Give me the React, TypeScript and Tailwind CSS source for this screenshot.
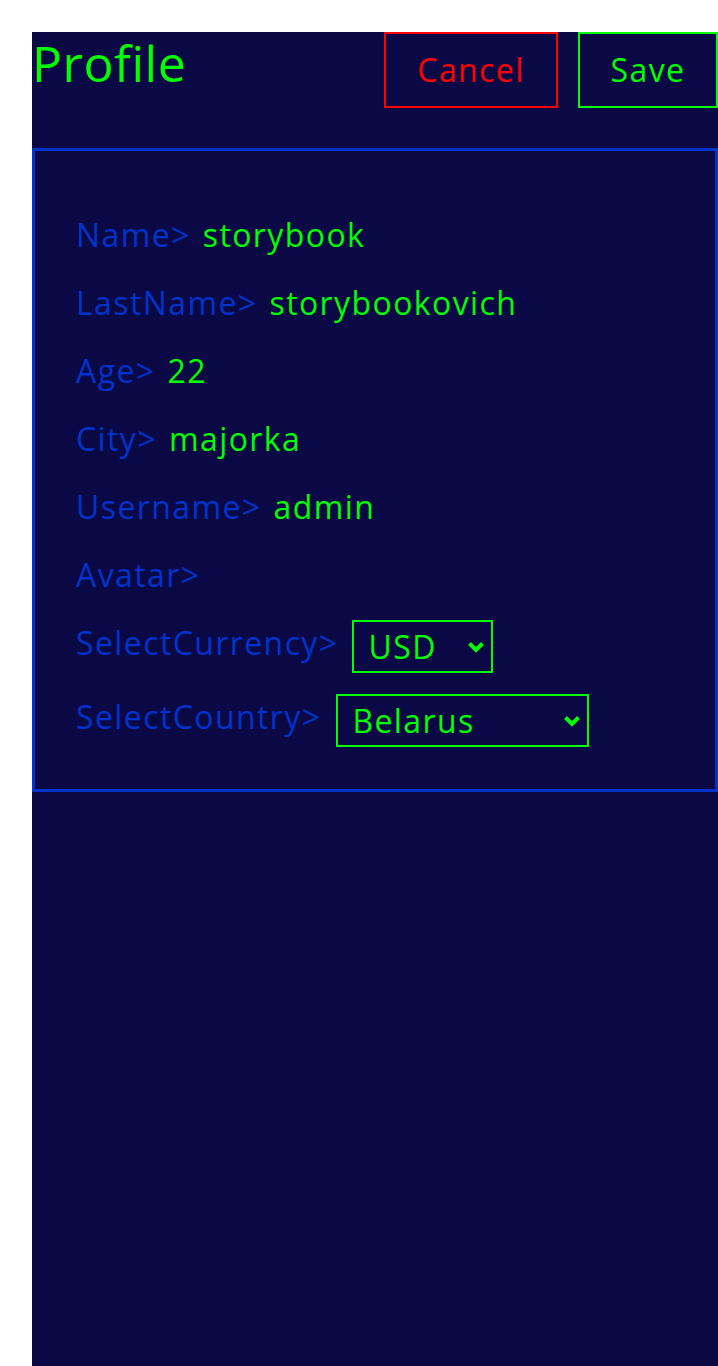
import { type ReactNode } from "react";

const FONT = "font-['Open_Sans','Liberation_Sans',sans-serif] font-normal tracking-[1.4px]";

type Field = { label: string; value?: string };

const fields: Field[] = [
  { label: "Name>", value: "storybook" },
  { label: "LastName>", value: "storybookovich" },
  { label: "Age>", value: "22" },
  { label: "City>", value: "majorka" },
  { label: "Username>", value: "admin" },
  { label: "Avatar>" },
];

function Chevron() {
  return (
    <svg
      aria-hidden
      viewBox="0 0 18 12"
      className="pointer-events-none absolute top-1/2 right-[8px] h-[12px] w-[18px] -translate-y-1/2"
    >
      <path d="M2.5 2.5 L9 9 L15.5 2.5" fill="none" stroke="#00ff00" strokeWidth="4" />
    </svg>
  );
}

function SelectBox({ value, width, children }: { value: string; width: string; children: ReactNode }) {
  return (
    <div className={`relative h-[53px] ${width}`}>
      <select
        defaultValue={value}
        className={`h-full w-full appearance-none border-2 border-[#00ff00] bg-transparent pl-[14px] text-[32px] leading-none text-[#00ff00] outline-none ${FONT}`}
      >
        {children}
      </select>
      <Chevron />
    </div>
  );
}

export default function App() {
  return (
    <div className={`min-h-screen bg-white pt-8 pl-8 ${FONT}`}>
      <main className="min-h-[1334px] bg-[#0a0845]">
        <header className="flex items-start justify-between">
          <h1 className="pt-[1px] text-[50px] leading-[60px] font-normal tracking-[0.5px] text-[#00ff00]">
            Profile
          </h1>
          <div className="flex gap-[20px]">
            <button
              type="button"
              className="h-[76px] w-[174px] border-2 border-[#ff0000] text-[32px] text-[#ff0000]"
            >
              Cancel
            </button>
            <button
              type="button"
              className="h-[76px] w-[140px] border-2 border-[#00ff00] text-[32px] text-[#00ff00]"
            >
              Save
            </button>
          </div>
        </header>

        <section className="mt-[40px] border-[3px] border-[#0033cc] px-[41px] pt-[50px] pb-[42px]">
          {fields.map((f) => (
            <div key={f.label} className="flex h-[68px] items-center gap-3 text-[32px]">
              <span className="text-[#0033cc]">{f.label}</span>
              {f.value ? <span className="text-[#00ff00]">{f.value}</span> : null}
            </div>
          ))}

          <div className="mt-[11px] flex items-start gap-[14px] text-[32px]">
            <span className="leading-[46px] text-[#0033cc]">SelectCurrency&gt;</span>
            <SelectBox value="USD" width="w-[141px]">
              <option value="USD">USD</option>
              <option value="EUR">EUR</option>
              <option value="RUB">RUB</option>
            </SelectBox>
          </div>

          <div className="mt-[21px] flex items-start gap-[15px] text-[32px]">
            <span className="leading-[46px] text-[#0033cc]">SelectCountry&gt;</span>
            <SelectBox value="Belarus" width="w-[253px]">
              <option value="Belarus">Belarus</option>
              <option value="Russia">Russia</option>
              <option value="Ukraine">Ukraine</option>
            </SelectBox>
          </div>
        </section>
      </main>
    </div>
  );
}
